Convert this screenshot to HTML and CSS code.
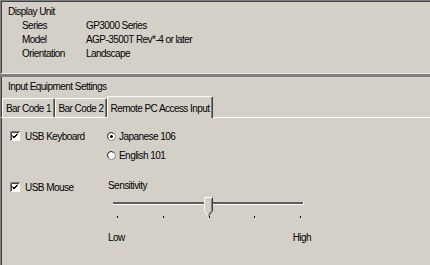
FILE: index.html
```html
<!DOCTYPE html>
<html>
<head>
    <title>Display Unit Settings</title>
    <link rel="stylesheet" href="styles.css">
</head>
<body>
    <div class="window">
        <section class="display-unit">
            <div class="group-title">Display Unit</div>
            <div class="info">
                <span>Series</span><span>GP3000 Series</span>
                <span>Model</span><span>AGP-3500T Rev*-4 or later</span>
                <span>Orientation</span><span>Landscape</span>
            </div>
        </section>
        <section class="input-settings">
            <div class="group-title">Input Equipment Settings</div>
            <div class="tabs">
                <div class="tab tab-1">Bar Code 1</div>
                <div class="tab tab-2">Bar Code 2</div>
                <div class="tab tab-active">Remote PC Access Input</div>
            </div>
            <div class="tab-panel">
                <label class="check">
                    <svg width="10" height="10" viewBox="0 0 10 10">
                        <rect x="0" y="0" width="10" height="10" fill="#ffffff"/>
                        <path d="M0.5 10 V0.5 H10" fill="none" stroke="#808080"/>
                        <path d="M1.5 9 V1.5 H9" fill="none" stroke="#404040"/>
                        <path d="M2.5 4.5 L4 6 L7.5 2.5 M2.5 5.5 L4 7 L7.5 3.5" fill="none" stroke="#000000"/>
                    </svg>
                    USB Keyboard
                </label>
                <div class="radios">
                    <label class="radio">
                        <svg width="9" height="9" viewBox="0 0 9 9">
                            <circle cx="4.5" cy="4.5" r="4" fill="#ffffff" stroke="#808080"/>
                            <path d="M1.5 6.5 A3.2 3.2 0 0 1 6.5 1.5" fill="none" stroke="#404040"/>
                            <circle cx="4.5" cy="4.5" r="1.5" fill="#000000"/>
                        </svg>
                        Japanese 106
                    </label>
                    <label class="radio">
                        <svg width="9" height="9" viewBox="0 0 9 9">
                            <circle cx="4.5" cy="4.5" r="4" fill="#ffffff" stroke="#808080"/>
                            <path d="M1.5 6.5 A3.2 3.2 0 0 1 6.5 1.5" fill="none" stroke="#404040"/>
                        </svg>
                        English 101
                    </label>
                </div>
                <label class="check mouse">
                    <svg width="10" height="10" viewBox="0 0 10 10">
                        <rect x="0" y="0" width="10" height="10" fill="#ffffff"/>
                        <path d="M0.5 10 V0.5 H10" fill="none" stroke="#808080"/>
                        <path d="M1.5 9 V1.5 H9" fill="none" stroke="#404040"/>
                        <path d="M2.5 4.5 L4 6 L7.5 2.5 M2.5 5.5 L4 7 L7.5 3.5" fill="none" stroke="#000000"/>
                    </svg>
                    USB Mouse
                </label>
                <div class="sensitivity">
                    <div>Sensitivity</div>
                    <div class="slider">
                        <div class="track"></div>
                        <svg class="thumb" width="9" height="20" viewBox="0 0 9 20">
                            <path d="M0.5 0.5 H8.5 V14 L4.5 19 L0.5 14 Z" fill="#d4d0c8"/>
                            <path d="M0.5 14 V0.5 H8" fill="none" stroke="#ffffff"/>
                            <path d="M8.5 0.5 V14 L4.5 19" fill="none" stroke="#404040"/>
                            <path d="M7.5 1.5 V13.6 L4.5 17.4" fill="none" stroke="#808080"/>
                            <path d="M0.5 14 L4 18.4" fill="none" stroke="#ffffff"/>
                        </svg>
                        <div class="ticks">
                            <span></span><span></span><span></span><span></span><span></span>
                        </div>
                    </div>
                    <div class="range-labels">
                        <span>Low</span>
                        <span>High</span>
                    </div>
                </div>
            </div>
        </section>
    </div>
</body>
</html>
```

FILE: styles.css
```css
body {
    margin: 0;
    padding: 0;
    background-color: #d4d0c8;
    font-family: "Liberation Sans", Arial, sans-serif;
    font-size: 10px;
    letter-spacing: -0.55px;
    color: #000000;
}
.window {
    height: 265px;
    box-sizing: border-box;
    border-left: 1px solid #808080;
    border-top: 1px solid #808080;
    box-shadow: inset 1px 1px 0 #404040;
    overflow: hidden;
}
.display-unit {
    height: 73px;
    box-sizing: border-box;
    padding: 4px 0 0 7px;
    border-bottom: 1px solid #eeebe5;
}
.group-title {
    line-height: 14px;
}
.info {
    display: grid;
    grid-template-columns: 64px auto;
    margin-left: 14px;
    line-height: 14px;
}
.input-settings {
    border-top: 3px solid #7f7f7f;
    padding-top: 3px;
}
.input-settings .group-title {
    padding-left: 7px;
}
.tabs {
    display: flex;
    align-items: flex-end;
    height: 21px;
    margin-top: 2px;
    padding-left: 1px;
}
.tab {
    height: 19px;
    box-sizing: border-box;
    padding-top: 3px;
    line-height: 14px;
    text-align: center;
    white-space: nowrap;
    border-top: 1px solid #ffffff;
    border-left: 1px solid #ffffff;
    border-right: 1px solid #404040;
    box-shadow: inset -1px 0 0 #808080;
    border-radius: 2px 2px 0 0;
}
.tab-1 {
    width: 53px;
}
.tab-2 {
    width: 52px;
}
.tab-active {
    position: relative;
    width: 106px;
    height: 22px;
    padding-top: 5px;
    margin-bottom: -1px;
    background-color: #d4d0c8;
}
.tab-panel {
    border-top: 1px solid #ffffff;
    display: grid;
    grid-template-columns: 97px auto;
    grid-template-rows: auto auto;
    row-gap: 13px;
    padding: 9px 0 0 9px;
}
.check {
    display: flex;
    align-items: center;
    gap: 5px;
    height: 16px;
    margin-top: 1px;
}
.radios {
    display: flex;
    flex-direction: column;
}
.radio {
    display: flex;
    align-items: center;
    gap: 3px;
    height: 19px;
}
.sensitivity {
    line-height: 16px;
    padding-left: 1px;
}
.slider {
    position: relative;
    width: 193px;
    height: 28px;
    margin-left: 5px;
}
.track {
    position: absolute;
    left: 0;
    top: 8px;
    width: 190px;
    height: 2px;
    background-color: #5f5f5f;
    border-right: 1px solid #ffffff;
    border-bottom: 1px solid #ffffff;
}
.thumb {
    position: absolute;
    left: 91px;
    top: 3px;
}
.ticks {
    position: absolute;
    left: 4px;
    top: 22px;
    width: 184px;
    display: flex;
    justify-content: space-between;
}
.ticks span {
    width: 1px;
    height: 2px;
    background-color: #000000;
}
.range-labels {
    display: flex;
    justify-content: space-between;
    width: 203px;
    margin-top: 8px;
}
```
